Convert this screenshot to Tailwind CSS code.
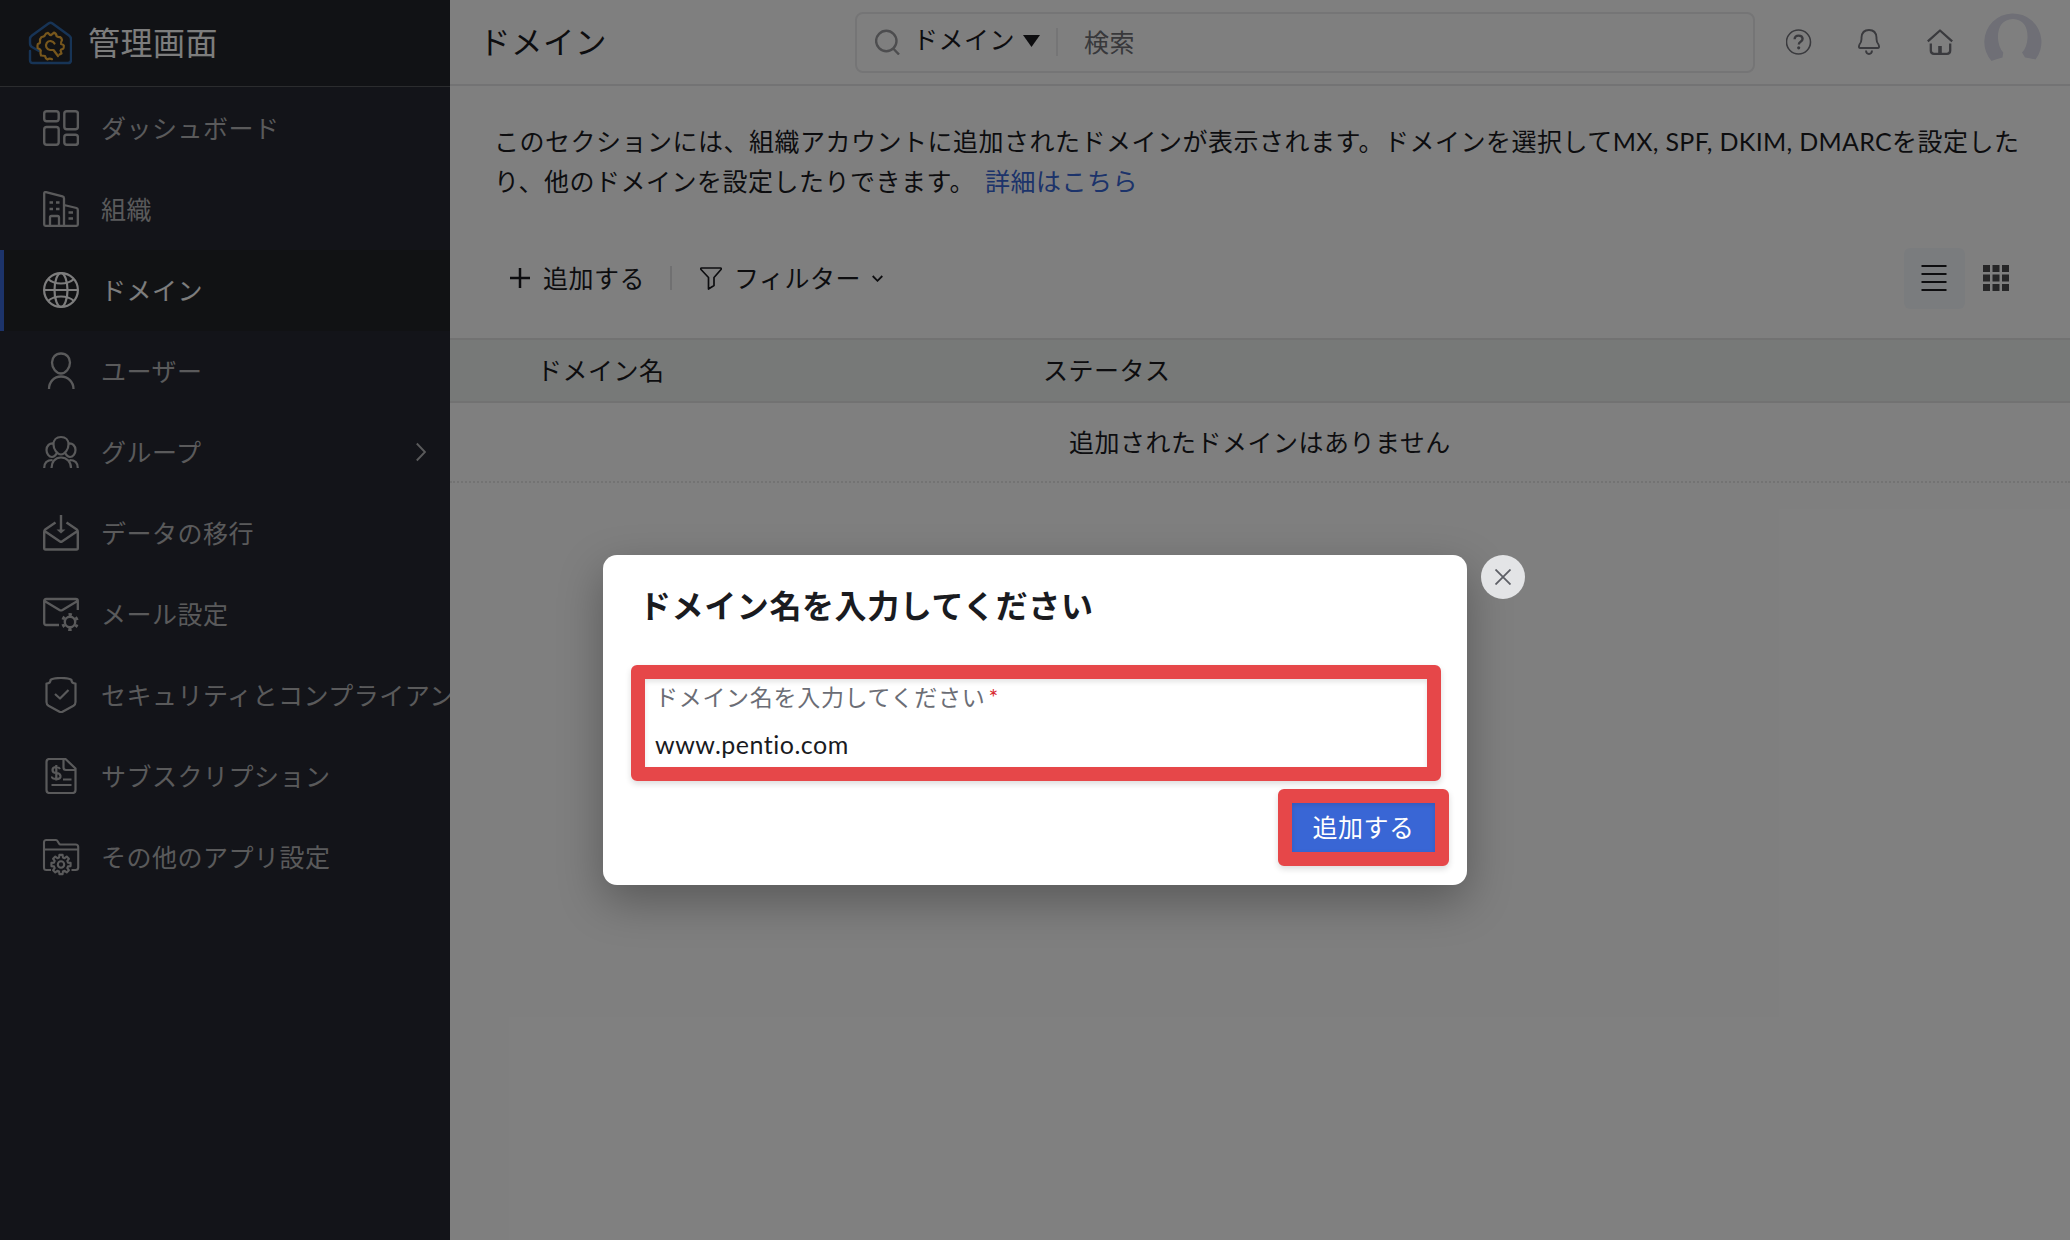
<!DOCTYPE html>
<html lang="ja">
<head>
<meta charset="utf-8">
<title>管理画面</title>
<script src="https://cdn.jsdelivr.net/npm/@tailwindcss/browser@4"></script>
</head>
<body class="relative h-[1240px] w-[2070px] overflow-hidden bg-white font-[Lato,'Noto_Sans_CJK_JP',sans-serif] text-[25px] leading-10 tracking-[0.5px] text-[#1a1b1f]">
<div class="flex h-full">
  <!-- Sidebar -->
  <aside class="flex w-[450px] shrink-0 flex-col overflow-hidden bg-[#262832] text-[#b4b5b7]">
    <div class="flex h-[87px] items-center gap-4 border-b border-[#57585c] bg-[#22242a] pl-7 text-[32px] text-[#fafafa]">
      <svg class="size-11 shrink-0" viewBox="0 0 44 44" fill="none" stroke-linecap="round" stroke-linejoin="round">
        <path d="M11 30 4 26Q2 25 2 22V18Q2 16 4 14.500L20.500 2.500Q22.500 1 24.500 2.500L41 14.500Q43 16 43 18V39Q43 42 40 42H5Q2 42 2 39V30" stroke="#2f69ad" stroke-width="2.400"/>
        <path d="M31.500 33.500 33.500 32.500 32.500 29.500Q32.600 28.300 35 27.800 35.800 27.500 35.800 24.500 35.600 23.700 33 23 32.500 22 34 19 33.700 17 32 16 29.500 16.300 28.500 15 28.500 12.500 26 11.600 24.500 13 23 14.100 21.500 14 20 11.800 17.500 12.200 17 14 16.500 15.800 13.500 16 11.500 18 12 20.500 12.400 22.400 9.800 23 9.300 24.500 9.600 27 12 28 12.800 29.500 12 32 13 34.500 15.500 34.700 17 35 17.500 37.500 19.500 38.500 21.500 36.800 24 38.200 25.500 37.600" stroke="#f0ae39" stroke-width="2.200"/>
        <path d="M26.500 22.500A4.500 4.500 0 1 0 22 29H25.500L30 35" stroke="#f0ae39" stroke-width="2.200"/>
      </svg>
      <span>管理画面</span>
    </div>
    <nav class="flex flex-col whitespace-nowrap pt-px">
      <a class="flex h-[81px] shrink-0 items-center gap-[22px] pl-[43px]">
        <svg class="-mt-px size-9 shrink-0" viewBox="0 0 36 36" fill="none" stroke="currentColor" stroke-width="2.400"><rect x="1.200" y="1.200" width="14.500" height="10" rx="2.500"/><rect x="21.300" y="1.200" width="13.600" height="18" rx="2.500"/><rect x="1.200" y="17" width="14.500" height="17.800" rx="2.500"/><rect x="21.300" y="24.800" width="13.600" height="10" rx="2.500"/></svg>
        <span class="-mt-0.5">ダッシュボード</span>
      </a>
      <a class="flex h-[81px] shrink-0 items-center gap-[22px] pl-[43px]">
        <svg class="-mt-px size-9 shrink-0" viewBox="0 0 36 36" fill="none" stroke="currentColor" stroke-width="2.300" stroke-linejoin="round"><path d="M21 34.800H2.500Q1.200 34.800 1.200 33.500V2.500Q1.200 .7 3 1.200L19.500 5.400Q21 5.800 21 7.500ZM21 14 33.500 17Q34.800 17.400 34.800 19V33.500Q34.800 34.800 33.500 34.800H21M7 34.800V26.500Q7 25 8.500 25H14.500Q16 25 16 26.500V34.800"/><path d="M6.500 11.500H10M13 11.500H16.500M6.500 18H10M13 18H16.500M25.500 21.500H30M25.500 27.500H30"/></svg>
        <span class="-mt-0.5">組織</span>
      </a>
      <a class="flex h-[81px] shrink-0 items-center gap-[22px] border-l-4 border-[#3966d5] bg-[#222429] pl-[39px] text-[#fafafa]">
        <svg class="-mt-px size-9 shrink-0" viewBox="0 0 36 36" fill="none" stroke="currentColor" stroke-width="2.200"><circle cx="18" cy="18" r="16.900"/><ellipse cx="18" cy="18" rx="6.500" ry="16.900"/><path d="M1 18H35M5 7Q10 11.500 18 11.500T31 7M5 29Q10 24.500 18 24.500T31 29"/></svg>
        <span class="-mt-0.5">ドメイン</span>
      </a>
      <a class="flex h-[81px] shrink-0 items-center gap-[22px] pl-[43px]">
        <svg class="-mt-px size-9 shrink-0 overflow-visible" viewBox="0 0 36 36" fill="none" stroke="currentColor" stroke-width="2.300"><path d="M18 .5C23.500 .5 27 4.500 27 9.500 27 15.500 22.500 20.500 18 20.500S9 15.500 9 9.500C9 4.500 12.500 .5 18 .5ZM6 36C6 29 11 23.500 18 23.500S30.500 29 30.500 36"/></svg>
        <span class="-mt-0.5">ユーザー</span>
      </a>
      <a class="flex h-[81px] shrink-0 items-center gap-[22px] pl-[43px]">
        <svg class="-mt-px size-9 shrink-0" viewBox="0 0 36 36" fill="none" stroke="currentColor" stroke-width="2.200"><path d="M18 3C22.500 3 25.500 6 25.500 10.500S22 20.500 18 20.500 10.500 15 10.500 10.500 13.500 3 18 3ZM8.500 34C8.500 28 12 23.500 18 23.500S28 28 28 34M11 9.500C6.500 8.500 3.500 12 3.500 16 3.500 19.500 6 23 9 23 11 23 12.500 21.500 13.500 19.500M25 9.500C29.500 8.500 32.500 12 32.500 16 32.500 19.500 30 23 27 23 25 23 23.500 21.500 22.500 19.500M1.200 34C1.200 29 4 26 9.500 26M34.800 34C34.800 29 32 26 26.500 26"/></svg>
        <span class="-mt-0.5">グループ</span>
        <svg class="mr-[24px] -mt-px ml-auto h-5 w-[10px]" viewBox="0 0 10 20" fill="none" stroke="currentColor" stroke-width="1.900"><path d="M.8 1.500 9 10 .8 18.500"/></svg>
      </a>
      <a class="flex h-[81px] shrink-0 items-center gap-[22px] pl-[43px]">
        <svg class="-mt-px size-9 shrink-0" viewBox="0 0 36 36" fill="none" stroke="currentColor" stroke-width="2.400" stroke-linejoin="round"><path d="M12.500 7.500 2.200 14.500Q1.200 15.300 1.200 17V33Q1.200 34.500 2.500 34.500H33.500Q34.800 34.500 34.800 33V17Q34.800 15.300 33.800 14.500L23.500 7.500M1.500 16 17 26.500Q18 27.200 19 26.500L34.500 16M18 0V15" /><path d="M13.500 14.500H22.500L18 18.500Z" fill="currentColor" stroke="none"/></svg>
        <span class="-mt-0.5">データの移行</span>
      </a>
      <a class="flex h-[81px] shrink-0 items-center gap-[22px] pl-[43px]">
        <svg class="-mt-px size-9 shrink-0" viewBox="0 0 36 36" fill="none" stroke="currentColor" stroke-width="2.300" stroke-linejoin="round"><path d="M16 29H3.200Q1.200 29 1.200 27V5Q1.200 3 3.200 3H32.800Q34.800 3 34.800 5V14M1.500 5 16.500 14Q18 14.800 19.500 14L34.500 5"/><circle cx="27" cy="26" r="5.200" stroke-width="2.400"/><circle cx="27" cy="26" r="7.500" stroke-width="2.800" stroke-dasharray="3.300 4.554" stroke-dashoffset="1.650" transform="rotate(30 27 26)"/></svg>
        <span class="-mt-0.5">メール設定</span>
      </a>
      <a class="flex h-[81px] shrink-0 items-center gap-[22px] pl-[43px]">
        <svg class="-mt-px size-9 shrink-0" viewBox="0 0 36 36" fill="none" stroke="currentColor" stroke-width="2.200" stroke-linejoin="round"><path d="M18 1C23 1 26.500 1.500 28.500 3 28.500 5 30 6.500 32.500 6.500V25Q32.500 27.500 30.500 28.700L19.500 34.800Q18 35.500 16.500 34.800L5.500 28.700Q3.500 27.500 3.500 25V6.500C6 6.500 7.500 5 7.500 3 9.500 1.500 13 1 18 1Z"/><path d="M12 17 17 21.500 25.500 13"/></svg>
        <span class="-mt-0.5">セキュリティとコンプライアンス</span>
      </a>
      <a class="flex h-[81px] shrink-0 items-center gap-[22px] pl-[43px]">
        <svg class="-mt-px size-9 shrink-0" viewBox="0 0 36 36" fill="none" stroke="currentColor" stroke-width="2.200" stroke-linejoin="round"><path d="M6.500 1H22.500L32.500 10.500V32Q32.500 35 29.500 35H6.500Q3.500 35 3.500 32V4Q3.500 1 6.500 1ZM20.500 1V9.500Q20.500 12 23 12H32.500M20 21.500H28.500M8.500 27H28.500"/><path d="M17 11Q16 9 13.300 9 9.500 9 9.500 12T13.300 15 17.500 18 13.300 21 9 18.500M13.300 7V22.500"/></svg>
        <span class="-mt-0.5">サブスクリプション</span>
      </a>
      <a class="flex h-[81px] shrink-0 items-center gap-[22px] pl-[43px]">
        <svg class="-mt-px size-9 shrink-0 overflow-visible" viewBox="0 0 36 36" fill="none" stroke="currentColor" stroke-width="2.100" stroke-linejoin="round"><path d="M8 31H3.500Q1 31 1 28.500V3.500Q1 1 3.500 1H13Q14 1 14.500 2L16 4.500Q16.500 5.500 17.500 5.500H32.500Q35.200 5.500 35.200 8V28.500Q35.200 31 32.500 31H28.500M1 10.500H35"/><circle cx="18" cy="25.500" r="3.200"/><path d="M16.100 18.500 16.400 15.900H19.600L19.900 18.500 21.600 19.200 23.700 17.600 25.900 19.800 24.300 21.900 25 23.600 27.600 23.900V27.100L25 27.400 24.300 29.100 25.900 31.200 23.700 33.400 21.600 31.800 19.900 32.500 19.600 35.100H16.400L16.100 32.500 14.400 31.800 12.300 33.400 10.100 31.200 11.700 29.100 11 27.400 8.400 27.100V23.900L11 23.600 11.700 21.900 10.100 19.800 12.300 17.600 14.400 19.200Z"/></svg>
        <span class="-mt-0.5">その他のアプリ設定</span>
      </a>
    </nav>
  </aside>

  <!-- Main content -->
  <main class="flex min-w-0 flex-1 flex-col">
    <header class="flex h-[86px] shrink-0 items-center border-b-2 border-[#e6e6e8]">
      <h1 class="w-[405px] pl-[29px] text-[31.500px]">ドメイン</h1>
      <div class="flex h-[61px] w-[900px] items-center rounded-lg border-2 border-[#eaeaec]">
        <svg class="ml-[18px] size-[26px]" viewBox="0 0 26 26" fill="none" stroke="#9a9b9e" stroke-width="2.400"><circle cx="11.300" cy="12" r="10.200"/><path d="M18.200 19.500 24 25.500"/></svg>
        <span class="-mt-1.5 ml-[12px]">ドメイン</span>
        <svg class="-mt-[3px] ml-2 h-3 w-[17px]" viewBox="0 0 17 12" fill="#1a1b1f"><path d="M0 0H17L8.500 12Z"/></svg>
        <span class="ml-4 h-7 w-0.5 bg-[#eaeaec]"></span>
        <span class="-mt-px ml-[26px] text-[#707176]">検索</span>
      </div>
      <div class="ml-[31px] flex items-center text-[#74757c]">
        <svg class="size-[26px]" viewBox="0 0 26 26" fill="none" stroke="currentColor"><circle cx="12.500" cy="13" r="12" stroke-width="1.600"/><path d="M8.600 10.200Q8.800 6.600 12.600 6.600T16.600 9.800Q16.600 11.600 14.600 12.800 12.800 13.800 12.800 15.600" stroke-width="2.400"/><circle cx="12.700" cy="18.800" r="1.600" fill="currentColor" stroke="none"/></svg>
        <svg class="ml-[46px] h-[26px] w-[22px]" viewBox="0 0 22 26" fill="none" stroke="currentColor" stroke-width="1.900" stroke-linejoin="round"><path d="M3.500 8.500Q4 1 11 1T18.500 8.500V10Q18.500 13 20.500 15.500 22 19 19.500 19H2.500Q0 19 1.500 15.500 3.500 13 3.500 10ZM8 21.500Q8.200 25 11 25T14 21.500"/></svg>
        <svg class="ml-[47px] size-[26px]" viewBox="0 0 26 26" fill="none" stroke="currentColor" stroke-width="2.300" stroke-linejoin="round"><path d="M.8 12.300 13 1.500 25.200 12.300M3.800 14.500V21.500Q3.800 24.800 7 24.800H20Q23.200 24.800 23.200 21.500V14.500"/><path d="M13 17V25" stroke-width="3.600"/></svg>
        <svg class="ml-[31px] size-[58px]" viewBox="0 0 58 58"><path d="M7.500 48A28.600 28.600 0 1 1 51.500 46.500Q46 45.500 41 44.500L38 39.500Q43 34.500 43.500 25 44 7 29 6 13.500 7 14 25 14.500 34.500 19.300 39.500L18.500 44.500Q12 46 7.500 48Z" fill="#dedfec"/></svg>
      </div>
    </header>

    <p class="pl-[44px] pt-[35px]">このセクションには、組織アカウントに追加されたドメインが表示されます。ドメインを選択して<span class="tracking-[0.3px]">MX, SPF, DKIM, DMARC</span>を設定した<br>り、他のドメインを設定したりできます。 <a class="ml-[3px] text-[#3966d5]">詳細はこちら</a></p>

    <div class="mt-[46px] flex h-[62px] items-center pl-[60px]">
      <svg class="size-5" viewBox="0 0 20 20" stroke="#1a1b1f" stroke-width="2.500"><path d="M10 0V20M0 10H20"/></svg>
      <span class="ml-[13px]">追加する</span>
      <span class="ml-[25px] h-6 w-0.5 bg-[#e0e0e2]"></span>
      <svg class="ml-[28px] h-[23px] w-[22px]" viewBox="0 0 22 23" fill="none" stroke="#1a1b1f" stroke-width="1.700" stroke-linejoin="round"><path d="M1.500 1H20.500Q21.800 1 21 2.500L14 10.500V18.500L8.500 22V10.500L1 2.500Q.3 1 1.500 1Z"/></svg>
      <span class="ml-[12px]">フィルター</span>
      <svg class="ml-[11px] h-[7px] w-[11px]" viewBox="0 0 11 7" fill="none" stroke="#1a1b1f" stroke-width="1.800"><path d="M.7 1 5.500 5.800 10.300 1"/></svg>
      <span class="ml-auto flex h-[61px] w-[61px] items-center justify-center rounded-md bg-[#f5f8fc]">
        <svg class="mr-px size-[26px]" viewBox="0 0 26 26" fill="#1a1b1f"><path d="M.5 0h25v2H.5zM.5 8h25v2H.5zM.5 16h25v2H.5zM.5 24h25v2H.5z"/></svg>
      </span>
      <svg class="mr-[61px] ml-[18px] size-[26px]" viewBox="0 0 26 26" fill="#4d4d4f"><path d="M0 0h7v7H0zM9.500 0h7v7h-7zM19 0h7v7h-7zM0 9.500h7v7H0zM9.500 9.500h7v7h-7zM19 9.500h7v7h-7zM0 19h7v7H0zM9.500 19h7v7h-7zM19 19h7v7h-7z"/></svg>
    </div>

    <div class="mt-[29px] flex h-[65px] items-center border-y-2 border-[#e4e4e4] bg-[#eff3f1]">
      <span class="-mt-0.5 w-[505px] pl-[87px]">ドメイン名</span>
      <span class="-mt-0.5 pl-[88px]">ステータス</span>
    </div>
    <div class="flex h-[80px] items-center justify-center border-b-2 border-dotted border-[#e6e6e6]">追加されたドメインはありません</div>
  </main>
</div>

<!-- Dialog -->
<div class="absolute inset-0 bg-black/50">
  <div class="relative mx-auto mt-[555px] flex h-[330px] w-[864px] flex-col rounded-[14px] bg-white shadow-[0_16px_45px_rgba(0,0,0,0.3)]">
    <h2 class="mt-[31px] pl-[36px] text-[32px] font-bold tracking-[0.6px]">ドメイン名を入力してください</h2>
    <div class="relative mt-[39px] ml-[28px] h-[116px] w-[810px] rounded-md border-[14px] border-[#e64749] pl-[10px] shadow-[0_3px_6px_rgba(0,0,0,0.14),inset_0_3px_5px_rgba(0,0,0,0.1)]">
      <div class="flex h-[36px] items-center text-[23px] tracking-[0.7px] text-[#6b6d75]">ドメイン名を入力してください<span class="ml-[3px] text-[#d8282f]">*</span></div>
      <div class="mt-[9px] leading-10">www.pentio.com</div>
    </div>
    <div class="mt-2 ml-auto mr-[18px] flex h-[77px] w-[171px] items-center justify-center rounded-md border-[14px] border-[#e64749] bg-[#3966d5] bg-clip-padding text-white shadow-[0_3px_6px_rgba(0,0,0,0.14),inset_0_2px_5px_rgba(0,0,0,0.12)]"><span class="-mt-0.5">追加する</span></div>
    <button class="absolute top-0 -right-[58px] flex size-11 items-center justify-center rounded-full bg-[#e3e4e6]">
      <svg class="size-4" viewBox="0 0 16 16" stroke="#5d5f66" stroke-width="1.800"><path d="M.5 .5 15.500 15.500M15.500 .5 .5 15.500"/></svg>
    </button>
  </div>
</div>
</body>
</html>
